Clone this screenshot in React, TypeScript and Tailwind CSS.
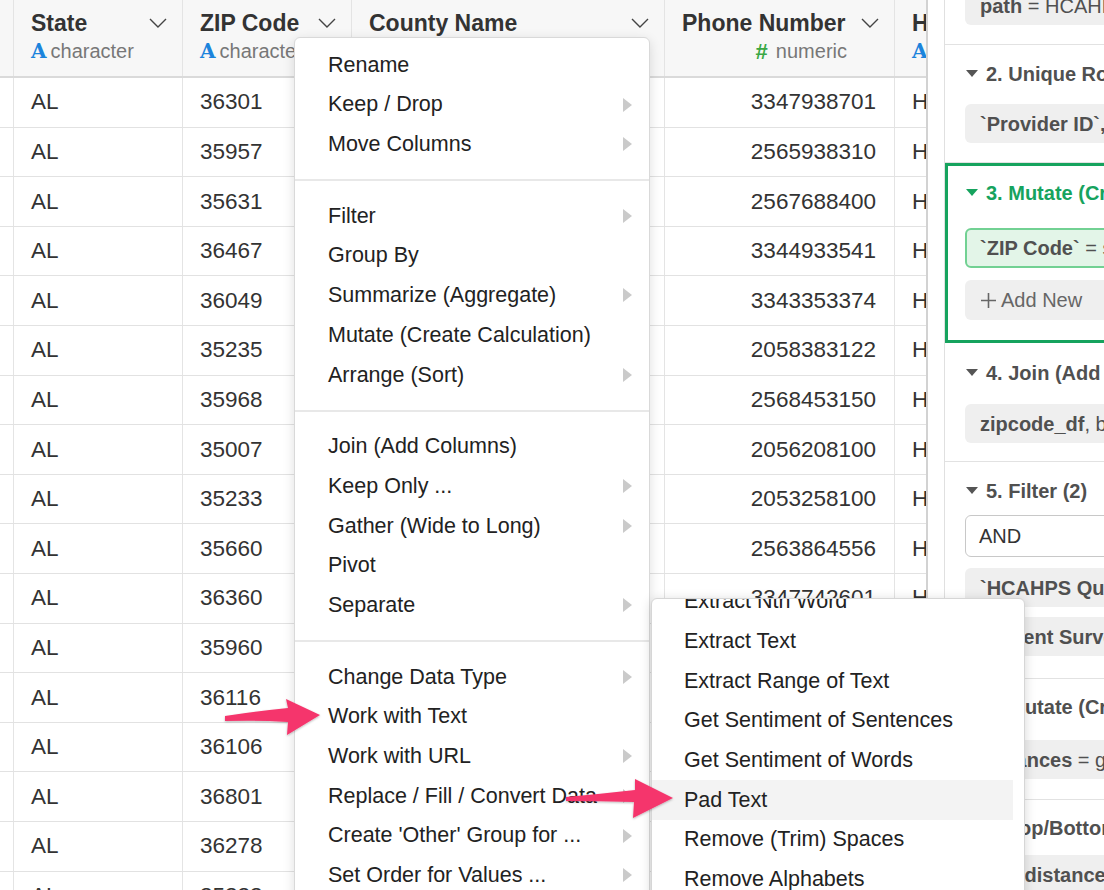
import type { ReactNode } from "react";

const ROWS: [string, string, string][] = [
	["36301", "HOUSTON", "3347938701"],
	["35957", "MARSHALL", "2565938310"],
	["35631", "LAUDERDALE", "2567688400"],
	["36467", "COVINGTON", "3344933541"],
	["36049", "PIKE", "3343353374"],
	["35235", "JEFFERSON", "2058383122"],
	["35968", "DEKALB", "2568453150"],
	["35007", "SHELBY", "2056208100"],
	["35233", "JEFFERSON", "2053258100"],
	["35660", "COLBERT", "2563864556"],
	["36360", "DALE", "3347742601"],
	["35960", "CHEROKEE", "2569273536"],
	["36116", "MONTGOMERY", "3342882100"],
	["36106", "MONTGOMERY", "3342934000"],
	["36801", "LEE", "3347493411"],
	["36278", "RANDOLPH", "2563578111"],
	["35223", "JEFFERSON", "2058778700"],
];

type MenuItem = { label: string; sub?: boolean };

const MENU: MenuItem[][] = [
	[{ label: "Rename" }, { label: "Keep / Drop", sub: true }, { label: "Move Columns", sub: true }],
	[
		{ label: "Filter", sub: true },
		{ label: "Group By" },
		{ label: "Summarize (Aggregate)", sub: true },
		{ label: "Mutate (Create Calculation)" },
		{ label: "Arrange (Sort)", sub: true },
	],
	[
		{ label: "Join (Add Columns)" },
		{ label: "Keep Only ...", sub: true },
		{ label: "Gather (Wide to Long)", sub: true },
		{ label: "Pivot" },
		{ label: "Separate", sub: true },
	],
	[
		{ label: "Change Data Type", sub: true },
		{ label: "Work with Text" },
		{ label: "Work with URL", sub: true },
		{ label: "Replace / Fill / Convert Data", sub: true },
		{ label: "Create 'Other' Group for ...", sub: true },
		{ label: "Set Order for Values ...", sub: true },
	],
];

const TEXT_MENU = [
	"Extract Nth Word",
	"Extract Text",
	"Extract Range of Text",
	"Get Sentiment of Sentences",
	"Get Sentiment of Words",
	"Pad Text",
	"Remove (Trim) Spaces",
	"Remove Alphabets",
];

function Chevron() {
	return (
		<svg width="18" height="10" viewBox="0 0 18 10" className="shrink-0">
			<path d="M1 1l8 8 8-8" fill="none" stroke="#444" strokeWidth="1.4" />
		</svg>
	);
}

function HeaderCell({
	width,
	title,
	numeric,
	last,
}: {
	width: string;
	title: string;
	numeric?: boolean;
	last?: boolean;
}) {
	return (
		<div
			className={`${width} shrink-0 overflow-hidden pl-[17px] pt-[9px] ${last ? "" : "border-r border-[#e4e4e4] pr-[15px]"}`}
		>
			<div className="flex h-[28px] items-center justify-between whitespace-nowrap">
				<span className="text-[23px] font-bold text-[#333]">{title}</span>
				{!last && <Chevron />}
			</div>
			<div className={`mt-[2px] flex h-[24px] items-center whitespace-nowrap ${numeric ? "justify-end pr-[32px]" : ""}`}>
				{numeric ? (
					<>
						<span className="text-[22px] font-bold text-[#3aa845]">#</span>
						<span className="ml-[8px] text-[20px] text-[#777]">numeric</span>
					</>
				) : (
					<>
						<span className="font-['DejaVu_Serif',serif] text-[20px] font-bold text-[#1c84dc]">A</span>
						<span className="ml-[4px] text-[20px] text-[#777]">character</span>
					</>
				)}
			</div>
		</div>
	);
}

function DataTable() {
	return (
		<div className="h-full w-[928px] shrink-0 overflow-hidden border-r-2 border-[#d2d2d2]">
			<div className="flex h-[78px] border-b-2 border-[#dadada] bg-[#f7f7f7]">
				<div className="w-[14px] shrink-0 border-r border-[#e4e4e4]" />
				<HeaderCell width="w-[169px]" title="State" />
				<HeaderCell width="w-[169px]" title="ZIP Code" />
				<HeaderCell width="w-[313px]" title="County Name" />
				<HeaderCell width="w-[230px]" title="Phone Number" numeric />
				<HeaderCell width="w-[31px]" title="HCAHPS Measure ID" last />
			</div>
			{ROWS.map(([zip, county, phone]) => (
				<div key={zip + phone} className="flex h-[49.6px] border-b border-[#e2e2e2] text-[22.5px] text-[#333]">
					<div className="w-[14px] shrink-0 border-r border-[#e4e4e4]" />
					<div className="flex w-[169px] shrink-0 items-center border-r border-[#e4e4e4] pl-[17px]">AL</div>
					<div className="flex w-[169px] shrink-0 items-center border-r border-[#e4e4e4] pl-[17px]">{zip}</div>
					<div className="flex w-[313px] shrink-0 items-center overflow-hidden whitespace-nowrap border-r border-[#e4e4e4] pl-[17px]">
						{county}
					</div>
					<div className="flex w-[230px] shrink-0 items-center justify-end border-r border-[#e4e4e4] pr-[18px]">
						{phone}
					</div>
					<div className="flex w-[31px] shrink-0 items-center overflow-hidden whitespace-nowrap pl-[17px]">
						H_COMP_1_A_P
					</div>
				</div>
			))}
		</div>
	);
}

function StepHeader({ label, green }: { label: string; green?: boolean }) {
	return (
		<div className="flex h-[28px] items-center whitespace-nowrap">
			<svg width="12" height="8" viewBox="0 0 12 8" className="ml-[1px] shrink-0">
				<path d="M0 0h12L6 7z" fill={green ? "#16a35e" : "#555"} />
			</svg>
			<span className={`ml-[8px] font-bold ${green ? "text-[#16a35e]" : "text-[#505050]"}`}>{label}</span>
		</div>
	);
}

function Pill({ children, className = "" }: { children: ReactNode; className?: string }) {
	return (
		<div
			className={`flex h-[39px] w-[360px] shrink-0 items-center whitespace-nowrap rounded-[6px] bg-[#efefef] pl-[15px] text-[#505050] ${className}`}
		>
			{children}
		</div>
	);
}

function StepsPanel() {
	return (
		<div className="h-full min-w-0 flex-1 overflow-hidden border-l border-[#e0e0e0] text-[20px]">
			<div className="flex h-[45px] flex-col border-b border-[#e2e2e2] pl-[20px]">
				<Pill className="-mt-[14px]">
					<span className="font-bold">path</span>&nbsp;= HCAHPS_Hospital.csv
				</Pill>
			</div>

			<div className="flex flex-col border-b border-[#e2e2e2] pb-[19px] pl-[20px] pt-[15px]">
				<StepHeader label="2. Unique Rows" />
				<Pill className="mt-[16px]">
					<span className="font-bold">`Provider ID`,</span>&nbsp;`HCAHPS Question`
				</Pill>
			</div>

			<div className="flex flex-col border-y-[3px] border-l-[3px] border-[#16a35e] pb-[20px] pl-[17px] pt-[13px]">
				<StepHeader label="3. Mutate (Create Calculation)" green />
				<div className="mt-[21px] flex h-[40px] w-[360px] shrink-0 items-center whitespace-nowrap rounded-[6px] border-2 border-[#72d193] bg-[#e3f5e8] pl-[13px] text-[#505050]">
					<span className="font-bold">`ZIP Code`</span>&nbsp;= str_pad(`ZIP Code`)
				</div>
				<div className="mt-[12px] flex h-[40px] w-[360px] shrink-0 items-center rounded-[6px] bg-[#efefef] pl-[16px] text-[#666]">
					<svg width="15" height="15" viewBox="0 0 15 15" className="shrink-0">
						<path d="M7.5 0v15M0 7.5h15" stroke="#666" strokeWidth="1.6" />
					</svg>
					<span className="ml-[5px]">Add New</span>
				</div>
			</div>

			<div className="flex flex-col border-b border-[#e2e2e2] pb-[18px] pl-[20px] pt-[16px]">
				<StepHeader label="4. Join (Add Columns)" />
				<Pill className="mt-[17px]">
					<span className="font-bold">zipcode_df</span>, by = c(&quot;ZIP Code&quot;)
				</Pill>
			</div>

			<div className="flex flex-col border-b border-[#e2e2e2] pb-[22px] pl-[20px] pt-[15px]">
				<StepHeader label="5. Filter (2)" />
				<div className="mt-[10px] flex h-[42px] w-[360px] shrink-0 items-center rounded-[6px] border border-[#c8c8c8] bg-white pl-[13px] text-[#333]">
					AND
				</div>
				<Pill className="mt-[11px]">
					<span className="font-bold">`HCAHPS Question`</span>&nbsp;== &quot;Summary&quot;
				</Pill>
				<Pill className="mt-[10px]">
					<span className="font-bold">`Patient Survey Star Rating`</span>
				</Pill>
			</div>

			<div className="flex flex-col border-b border-[#e2e2e2] pb-[20px] pl-[20px] pt-[14px]">
				<StepHeader label="6. Mutate (Create Calculation)" />
				<Pill className="mt-[19px]">
					<span className="font-bold">distances</span>&nbsp;= get_dist(lat, lon)
				</Pill>
			</div>

			<div className="flex flex-col pl-[20px] pt-[14px]">
				<StepHeader label="7. Top/Bottom N" />
				<Pill className="mt-[13px]">
					<span>100,&nbsp;</span>
					<span className="font-bold">distances</span>
				</Pill>
			</div>
		</div>
	);
}

function SubArrow() {
	return (
		<svg width="9" height="14" viewBox="0 0 9 14" className="shrink-0">
			<path d="M0 0L9 7L0 14Z" fill="#cacaca" />
		</svg>
	);
}

function ColumnMenu() {
	return (
		<div className="absolute left-[294px] top-[37px] h-[870px] w-[356px] overflow-hidden rounded-t-[6px] border border-[#d9d9d9] bg-white pt-[7px] shadow-[0_3px_12px_rgba(0,0,0,0.13)]">
			{MENU.map((group, gi) => (
				<div key={group[0].label}>
					{gi > 0 && (
						<div className="py-[15px]">
							<div className="h-[2px] bg-[#e8e8e8]" />
						</div>
					)}
					{group.map((item) => (
						<div
							key={item.label}
							className="flex h-[39.7px] items-center justify-between whitespace-nowrap pl-[33px] pr-[17px] text-[21.5px] text-[#222]"
						>
							<span>{item.label}</span>
							{item.sub && <SubArrow />}
						</div>
					))}
				</div>
			))}
		</div>
	);
}

function TextSubMenu() {
	return (
		<div className="absolute left-[651px] top-[598px] h-[310px] w-[374px] overflow-hidden rounded-t-[6px] border border-[#d6d6d6] bg-white shadow-[0_2px_12px_rgba(0,0,0,0.16)]">
			<div className="-mt-[17.4px] mr-[11px]">
				{TEXT_MENU.map((label) => (
					<div
						key={label}
						className={`flex h-[39.7px] items-center whitespace-nowrap pl-[32px] text-[21.5px] text-[#222] ${label === "Pad Text" ? "bg-[#f3f3f3]" : ""}`}
					>
						{label}
					</div>
				))}
			</div>
		</div>
	);
}

function Arrows() {
	return (
		<svg className="pointer-events-none absolute left-0 top-0" width="1104" height="890" viewBox="0 0 1104 890">
			<defs>
				<filter id="arrow-shadow" x="-20%" y="-40%" width="140%" height="180%">
					<feDropShadow dx="0" dy="1" stdDeviation="1.2" floodColor="#000" floodOpacity="0.28" />
				</filter>
			</defs>
			<path
				d="M225 716 Q258 711 288 708 L286 699 L320 715 L287 735 L288 722 Q258 720 225 721 Z"
				fill="#f5356c"
				filter="url(#arrow-shadow)"
			/>
			<path
				d="M566 797 Q600 794 635 790 L635 779 L673 798 L633 818 L634 802 Q600 801 566 801 Z"
				fill="#f5356c"
				filter="url(#arrow-shadow)"
			/>
		</svg>
	);
}

export default function App() {
	return (
		<div className="relative h-[890px] w-[1104px] overflow-hidden bg-white font-['Liberation_Sans',Arial,sans-serif]">
			<div className="flex h-full">
				<DataTable />
				<div className="w-[16px] shrink-0 bg-white" />
				<StepsPanel />
			</div>
			<ColumnMenu />
			<TextSubMenu />
			<Arrows />
		</div>
	);
}
